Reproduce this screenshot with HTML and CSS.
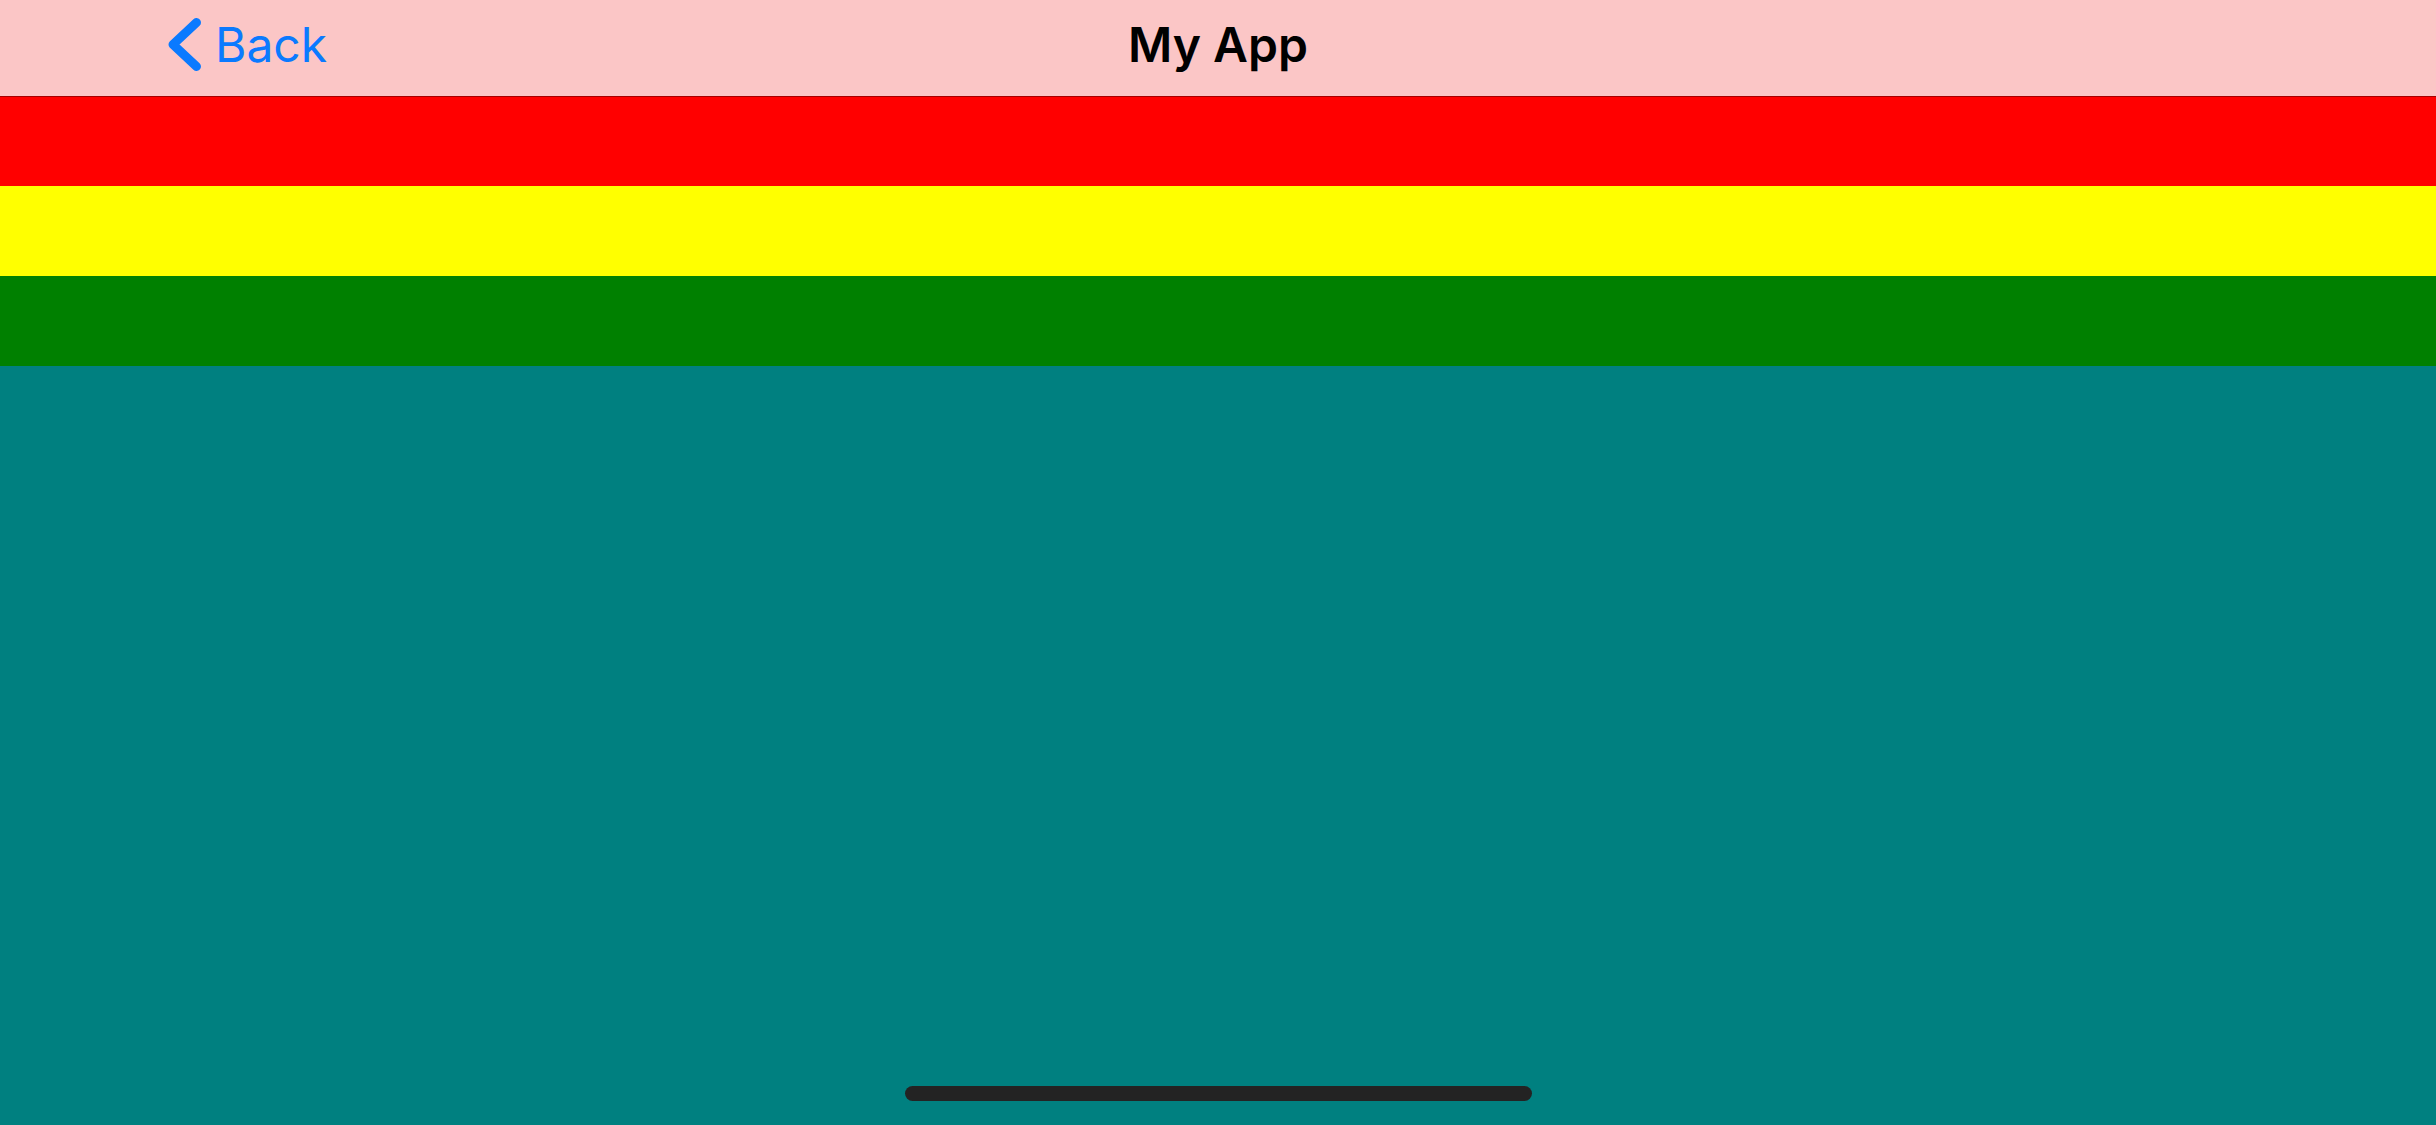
FILE: index.html
```html
<!DOCTYPE html>
<html lang="en">
<head>
<meta charset="utf-8">
<title>My App</title>
<link rel="stylesheet" href="styles.css">
</head>
<body>
<div class="screen">
  <header class="navbar">
    <div class="nav-left">
      <svg class="chevron" width="40" height="90" viewBox="0 0 40 90" aria-hidden="true">
        <polyline points="31.5,22.5 8,44.5 31.5,66.5" fill="none" stroke="#0A7AFF" stroke-width="9" stroke-linecap="round" stroke-linejoin="round"/>
      </svg>
      <span class="back-label">Back</span>
    </div>
    <div class="nav-title">My App</div>
    <div class="nav-right"></div>
  </header>
  <div class="band band-red"></div>
  <div class="band band-yellow"></div>
  <div class="band band-green"></div>
  <main class="content">
    <div class="home-indicator"></div>
  </main>
</div>
</body>
</html>
```
FILE: styles.css
```css
html, body {
  margin: 0;
  padding: 0;
  height: 100%;
}
body {
  font-family: Inter, "Liberation Sans", Arial, sans-serif;
  overflow: hidden;
}
.screen {
  display: flex;
  flex-direction: column;
  height: 1125px;
}
.navbar {
  height: 96px;
  box-sizing: border-box;
  padding-bottom: 6px;
  background: #fbc6c6;
  display: grid;
  grid-template-columns: 1fr auto 1fr;
  align-items: stretch;
  line-height: 90px;
}
.nav-left {
  display: flex;
  align-items: flex-start;
  padding-left: 165px;
}
.chevron {
  display: block;
  margin-right: 10px;
}
.back-label {
  color: #0A7AFF;
  font-size: 48px;
}
.nav-title {
  color: #000;
  font-size: 48px;
  font-weight: 600;
}
.band {
  height: 90px;
}
.band-red {
  background: #ff0000;
  box-shadow: inset 0 1px 0 rgba(0, 0, 0, 0.35);
}
.band-yellow {
  background: #ffff00;
}
.band-green {
  background: #008000;
}
.content {
  flex: 1;
  background: #008080;
  display: flex;
  justify-content: center;
  align-items: flex-end;
  padding-bottom: 24px;
}
.home-indicator {
  width: 627px;
  height: 15px;
  border-radius: 8px;
  background: #232323;
}
```
